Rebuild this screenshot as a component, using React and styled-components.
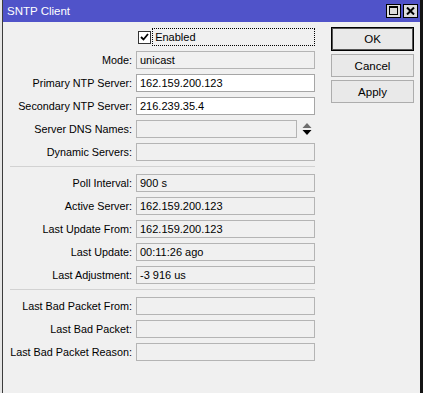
import React from "react"
import styled, { createGlobalStyle } from "styled-components"

const GlobalStyle = createGlobalStyle`
    html, body {
        margin: 0;
        padding: 0;
        background: #e6e6e6;
        overflow: hidden;
    }
    * {
        box-sizing: border-box;
    }
`

const StyledWindow = styled.div`
    margin-left: 2px;
    width: 421px;
    height: 393px;
    background: #f0f0f0;
    border-left: 1px solid #3c3c3c;
    border-right: 3px solid #141414;
    font-family: "Liberation Sans", Arial, sans-serif;
    font-size: 11px;
    color: #000;
    display: flex;
    flex-direction: column;
`
const StyledTitleBar = styled.div`
    height: 22px;
    background: #5053c9;
    color: #fff;
    display: flex;
    align-items: center;
    padding: 0 2px 1px 4px;
    font-size: 11.5px;
`
const StyledTitle = styled.span`
    flex: 1;
`
const StyledTitleButton = styled.div`
    width: 15px;
    height: 14px;
    margin-left: 2px;
    background: #dcdcdc;
    border: 1px solid #000;
    display: flex;
    align-items: center;
    justify-content: center;
`
const StyledBody = styled.div`
    display: flex;
    padding-top: 6px;
`
const StyledForm = styled.div`
    width: 312px;
    display: flex;
    flex-direction: column;
`
const StyledRow = styled.div`
    display: flex;
    align-items: center;
    height: 18px;
    margin-bottom: 5px;
`
const StyledLabel = styled.div`
    width: 129px;
    margin-right: 4px;
    text-align: right;
    white-space: nowrap;
    font-size: 10.8px;
`
const StyledField = styled.div`
    width: ${({ $width }) => $width || 179}px;
    height: 18px;
    padding-left: 3px;
    display: flex;
    align-items: center;
    white-space: nowrap;
    background: ${({ $editable }) => ($editable ? "#fff" : "#f0f0f0")};
    border: 1px solid ${({ $editable }) => ($editable ? "#a6a6a6" : "#b4b4b4")};
`
const StyledSeparator = styled.div`
    margin: 0 0 7px 7px;
    width: 305px;
    border-top: 1px solid #d2d2d2;
`
const StyledCheckbox = styled.div`
    width: 13px;
    height: 13px;
    margin: 0 1px 0 4px;
    background: #fff;
    border: 1px solid #333;
    display: flex;
    align-items: center;
    justify-content: center;
`
const StyledFocusLabel = styled.div`
    width: 165px;
    height: 18px;
    padding-left: 2px;
    display: flex;
    align-items: center;
    border: 1px dotted #000;
`
const StyledSpinner = styled.div`
    margin-left: 5px;
    display: flex;
    align-items: center;
`
const StyledButtons = styled.div`
    margin-left: 16px;
    display: flex;
    flex-direction: column;
    gap: 3px;
    margin-top: -1px;
`
const StyledButton = styled.div`
    width: 83px;
    height: ${({ $primary }) => ($primary ? 24 : 23)}px;
    display: flex;
    align-items: center;
    justify-content: center;
    background: #e9e9e9;
    border: 1px solid ${({ $primary }) => ($primary ? "#000" : "#adadad")};
    box-shadow: ${({ $primary }) => ($primary ? "inset 0 0 0 1px #555" : "none")};
    font-size: 11.5px;
`

const Field = ({ label, value, editable, width, children }) => (
    <StyledRow>
        <StyledLabel>{label}</StyledLabel>
        <StyledField $editable={editable} $width={width}>{value}</StyledField>
        {children}
    </StyledRow>
)

const App = () => (
    <>
        <GlobalStyle />
        <StyledWindow>
            <StyledTitleBar>
                <StyledTitle>SNTP Client</StyledTitle>
                <StyledTitleButton>
                    <svg width="9" height="9" viewBox="0 0 9 9">
                        <rect x="0.5" y="0.5" width="8" height="8" fill="none" stroke="#000" />
                        <rect x="0" y="0" width="9" height="2" fill="#000" />
                    </svg>
                </StyledTitleButton>
                <StyledTitleButton>
                    <svg width="9" height="8" viewBox="0 0 9 8">
                        <path d="M1 0.5 L8 7.5 M8 0.5 L1 7.5" stroke="#000" strokeWidth="2" />
                    </svg>
                </StyledTitleButton>
            </StyledTitleBar>
            <StyledBody>
                <StyledForm>
                    <StyledRow>
                        <StyledLabel />
                        <StyledCheckbox>
                            <svg width="9" height="8" viewBox="0 0 9 8">
                                <path d="M1 4 L3.5 6.5 L8 1" fill="none" stroke="#000" strokeWidth="1.8" />
                            </svg>
                        </StyledCheckbox>
                        <StyledFocusLabel>Enabled</StyledFocusLabel>
                    </StyledRow>
                    <Field label="Mode:" value="unicast" />
                    <Field label="Primary NTP Server:" value="162.159.200.123" editable />
                    <Field label="Secondary NTP Server:" value="216.239.35.4" editable />
                    <Field label="Server DNS Names:" width={161}>
                        <StyledSpinner>
                            <svg width="10" height="12" viewBox="0 0 10 12">
                                <path d="M5 0 L9.5 5 L0.5 5 Z" fill="#6e6e6e" />
                                <path d="M0.5 7 L9.5 7 L5 12 Z" fill="#000" />
                            </svg>
                        </StyledSpinner>
                    </Field>
                    <Field label="Dynamic Servers:" />
                    <StyledSeparator />
                    <Field label="Poll Interval:" value="900 s" />
                    <Field label="Active Server:" value="162.159.200.123" />
                    <Field label="Last Update From:" value="162.159.200.123" />
                    <Field label="Last Update:" value="00:11:26 ago" />
                    <Field label="Last Adjustment:" value="-3 916 us" />
                    <StyledSeparator />
                    <Field label="Last Bad Packet From:" />
                    <Field label="Last Bad Packet:" />
                    <Field label="Last Bad Packet Reason:" />
                </StyledForm>
                <StyledButtons>
                    <StyledButton $primary>OK</StyledButton>
                    <StyledButton>Cancel</StyledButton>
                    <StyledButton>Apply</StyledButton>
                </StyledButtons>
            </StyledBody>
        </StyledWindow>
    </>
)
export default App
